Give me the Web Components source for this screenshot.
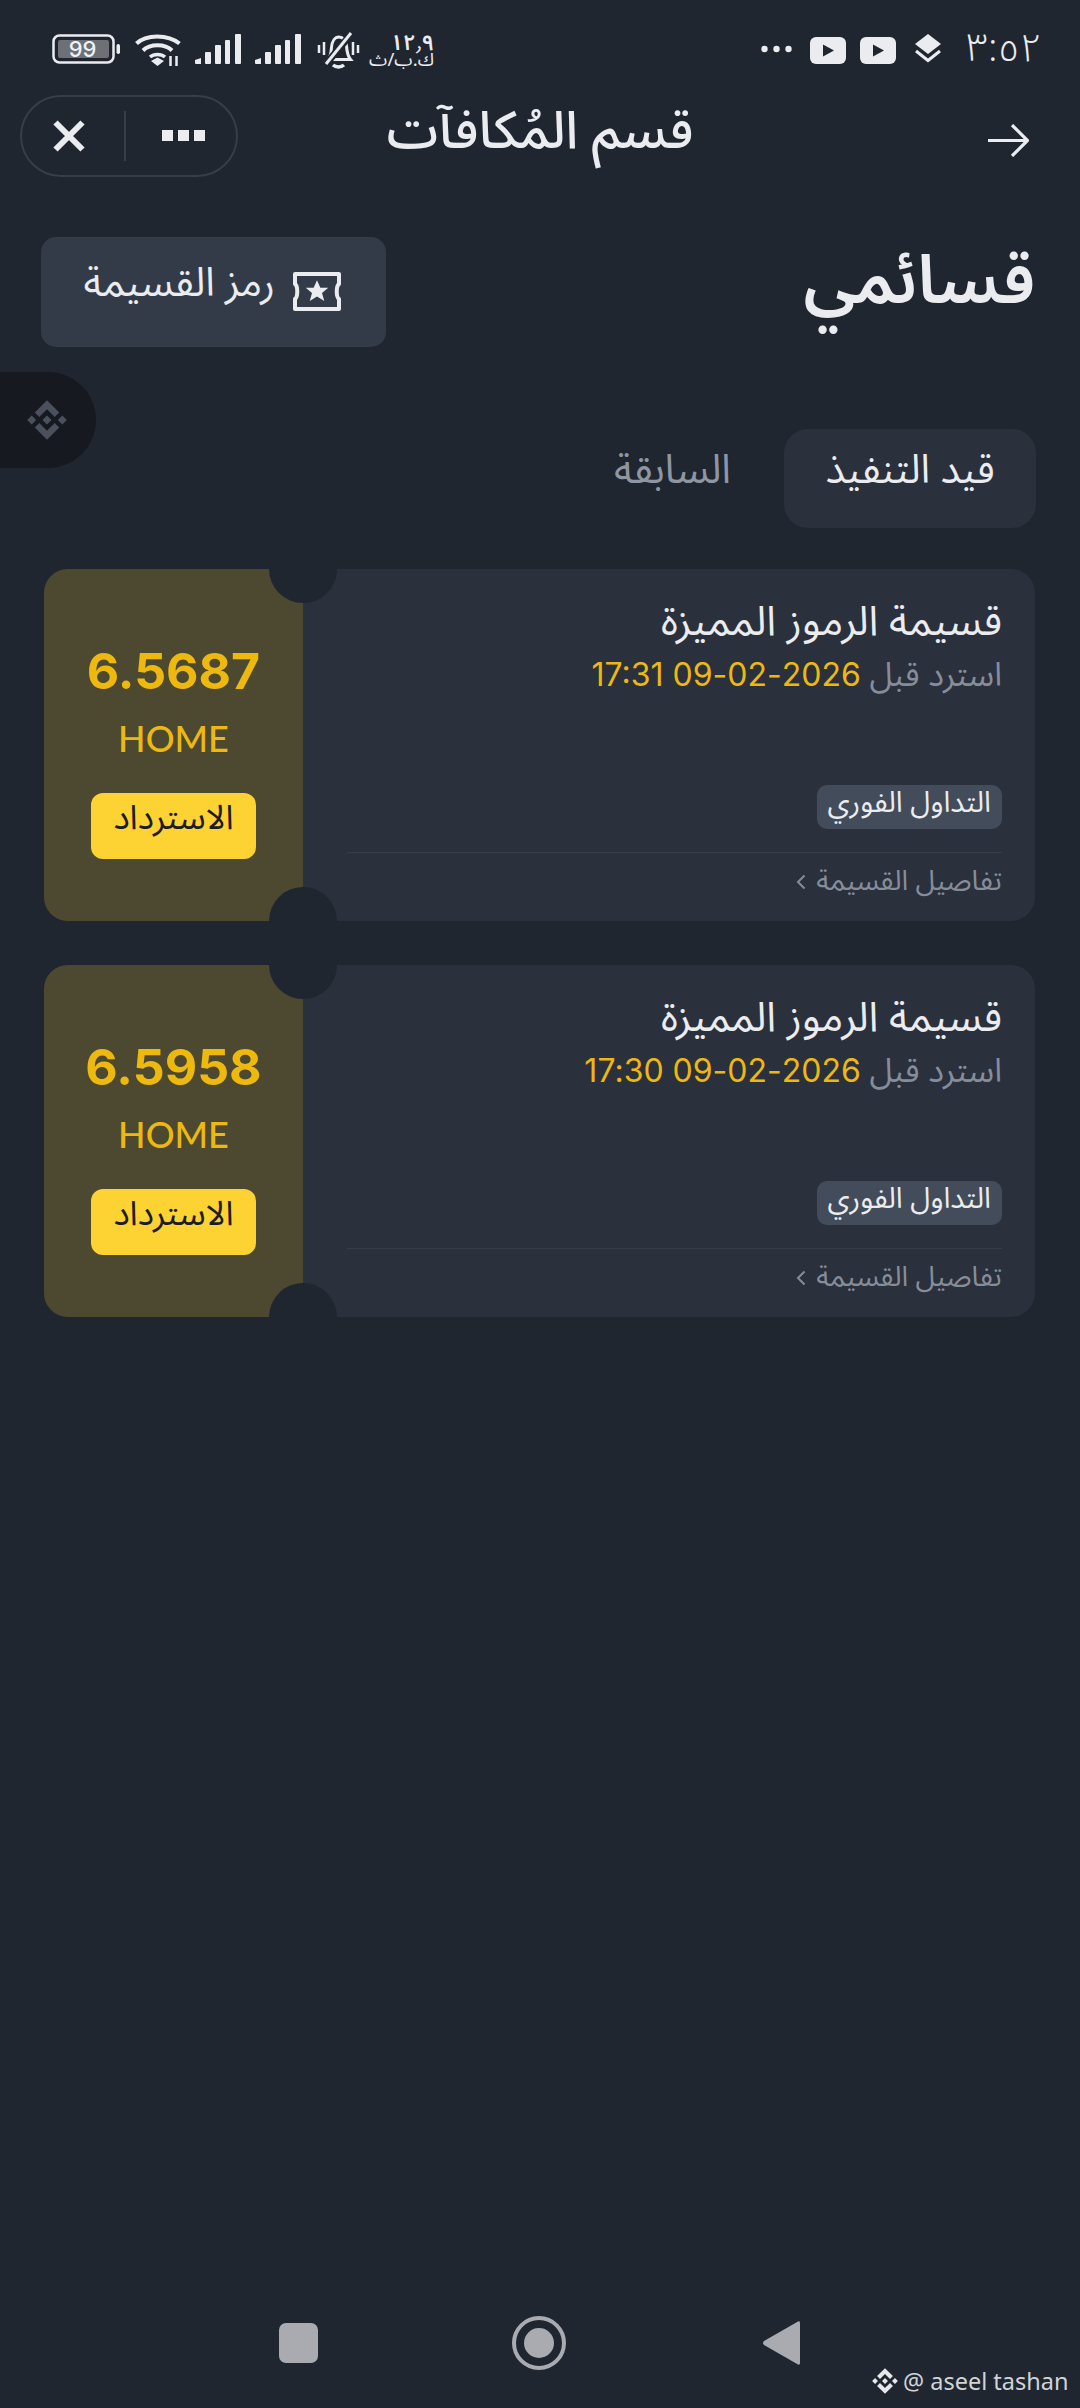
<!DOCTYPE html>
<html lang="ar" dir="rtl">
<head>
<meta charset="utf-8">
<style>
html,body{margin:0;padding:0;background:#1f2630}
body{width:1080px;height:2408px;overflow:hidden;font-family:"Noto Sans Arabic","Noto Sans","DejaVu Sans",sans-serif;color:#eaecef}
app-screen{display:flex}
</style>
</head>
<body>
<app-screen>
  <status-bar></status-bar>
  <nav-header title="قسم المُكافآت"></nav-header>
  <page-head heading="قسائمي" action="رمز القسيمة"></page-head>
  <tab-bar></tab-bar>
  <voucher-list>
    <voucher-card amount="6.5687" time="17:31" ls="0"></voucher-card>
    <voucher-card amount="6.5958" time="17:30" ls="-1"></voucher-card>
  </voucher-list>
  <system-nav></system-nav>
  <float-tab></float-tab>
  <water-mark></water-mark>
</app-screen>
<script>
const LOGO='<path d="M38.73 53.2L63 28.94l24.28 24.28 14.12-14.12L63 .7 24.61 39.09zM.7 63l14.12-14.12L28.94 63 14.82 77.12zM38.73 72.8L63 97.06l24.28-24.28 14.13 14.1L63 125.3 24.61 86.91zM97.06 63l14.12-14.12L125.3 63l-14.12 14.12zM77.32 63L63 48.68 52.41 59.27l-1.22 1.22-2.51 2.51L63 77.32 77.32 63z"/>';
function def(name,css,html){
  customElements.define(name,class extends HTMLElement{
    connectedCallback(){
      if(this.shadowRoot)return;
      const r=this.attachShadow({mode:'open'});
      const a=n=>this.getAttribute(n)||'';
      r.innerHTML='<style>'+css+'</style>'+html(a);
    }
  });
}
def('app-screen',':host{display:flex;flex-direction:column;position:relative;width:1080px;height:2408px;overflow:hidden}',()=>'<slot></slot>');

const signal='<svg width="46" height="30" viewBox="0 0 46 30" fill="#eaecef"><path d="M0 26l6-2v6H1a1 1 0 0 1-1-1z"/><rect x="10" y="18" width="6" height="12" rx="1"/><rect x="20" y="11" width="6" height="19" rx="1"/><rect x="30" y="6" width="5" height="24" rx="1"/><rect x="40" y="0" width="6" height="30" rx="1"/></svg>';
def('status-bar',`
:host{display:block;height:95px;box-sizing:border-box;padding:33px 38px 0 52px}
.row{display:flex;direction:ltr;align-items:flex-start;height:38px}
.l{display:flex;align-items:flex-start}
.r{margin-left:auto;display:flex;align-items:flex-start}
.bat{position:relative;width:68px;height:30px;margin-top:1px;display:block}
.bat span{position:absolute;left:0;width:61px;top:0;height:30px;text-align:center;font:500 22px/30px "Inter",sans-serif;color:#f0f1f3}
.sp{direction:rtl;display:flex;flex-direction:column;align-items:flex-start;margin-left:12px;margin-top:1px;color:#eaecef;width:62px;white-space:nowrap}
.sp b{font-weight:600;font-size:22px;line-height:18px;height:18px}
.sp span{font-size:18.500px;line-height:18px;height:18px}
.time{font-size:39px;line-height:32px;font-weight:300;color:#eaecef;margin-left:25px;direction:rtl;font-family:"Noto Sans Arabic","DejaVu Sans",sans-serif}
`,()=>`<div class="row">
<div class="l">
  <span class="bat"><svg width="68" height="30" viewBox="0 0 68 30"><rect x="1.5" y="1.5" width="60" height="27" rx="6" fill="none" stroke="#eaecef" stroke-width="2.5"/><rect x="6" y="6" width="51" height="18" rx="2" fill="#6d7077"/><rect x="64.5" y="10" width="3.5" height="10" rx="1.7" fill="#eaecef"/></svg><span>99</span></span>
  <svg style="margin-left:15px;margin-top:-1px" width="46" height="35" viewBox="0 0 46 35" fill="none" stroke="#eaecef"><path d="M1.5 11.500C11 2 33 2 44.500 11.500" stroke-width="4"/><path d="M8 18.500C15 11.500 30 11.500 37 18.500" stroke-width="4"/><path d="M15 25c4-3.500 11-3.500 15 0" stroke-width="3.500"/><path d="M16 29l6.500-3.500L29 29l-6.500 5z" fill="#eaecef" stroke="none"/><path d="M35.500 24v10M41.500 24v10" stroke-width="2.500"/></svg>
  <span style="margin-left:14px;margin-top:1px;display:block">${signal}</span>
  <span style="margin-left:14px;margin-top:1px;display:block">${signal}</span>
  <svg style="margin-left:16px;margin-top:-2px" width="43" height="39" viewBox="0 0 43 39" fill="none" stroke="#eaecef" stroke-width="3"><path d="M11 28.500c3-3 3-7 3.500-12C15 10 18 6 22 6s7 4 7.500 9c.5 6 1 10 4 13.500H11z"/><path d="M16 34c3 2.500 8 2.500 11 0" stroke-width="3.500"/><path d="M2 14v8M7 11v13M36 11v13M41 14v8" stroke-width="2.500"/><path d="M9 33L35 2" stroke="#1f2630" stroke-width="7"/><path d="M9 33L34 2" stroke-width="3"/></svg>
  <div class="sp"><b>١٢٫٩</b><span>ك.ب/ث</span></div>
</div>
<div class="r">
  <svg style="margin-top:12px" width="31" height="8" viewBox="0 0 31 8" fill="#eaecef"><circle cx="3.500" cy="4" r="3.200"/><circle cx="15.500" cy="4" r="3.200"/><circle cx="27.500" cy="4" r="3.200"/></svg>
  <svg style="margin-left:18px;margin-top:4px" width="36" height="27" viewBox="0 0 36 27"><rect width="36" height="27" rx="6" fill="#eaecef"/><path d="M13 7.500l11 6-11 6z" fill="#1f2630"/></svg>
  <svg style="margin-left:14px;margin-top:4px" width="36" height="27" viewBox="0 0 36 27"><rect width="36" height="27" rx="6" fill="#eaecef"/><path d="M13 7.500l11 6-11 6z" fill="#1f2630"/></svg>
  <svg style="margin-left:19px;margin-top:1px" width="26" height="29" viewBox="0 0 26 29"><path d="M13 0l13 10-13 10L0 10z" fill="#eaecef"/><path d="M1 17l12 9.500L25 17" fill="none" stroke="#eaecef" stroke-width="3"/></svg>
  <span class="time">٣:٥٢</span>
</div></div>`);

def('nav-header',`
:host{display:block;height:82px;padding:0 51px 0 20px}
.row{display:flex;direction:ltr;align-items:center;height:82px;position:relative}
.cap{width:218px;height:82px;box-sizing:border-box;border:2px solid #373d49;border-radius:41px;display:flex;align-items:center}
.x{margin-left:30px;display:block}
.d{width:2px;height:50px;background:#373d49;margin-left:38px}
.m{margin-left:36px;display:block}
h1{flex:1;margin:0;font-size:52px;line-height:72px;font-weight:500;text-align:center;color:#eaecef;padding:0 0 8px 31px;margin-left:-218px;margin-right:-41px;direction:rtl}
.a{display:block;margin-top:8px}
`,a=>`<div class="row">
<div class="cap">
<svg class="x" width="34" height="34" viewBox="0 0 34 34"><path d="M3.500 3.500L30.500 30.500M30.500 3.500L3.500 30.500" stroke="#eaecef" stroke-width="6" fill="none"/></svg>
<div class="d"></div>
<svg class="m" width="43" height="12" viewBox="0 0 43 12" fill="#eaecef"><rect width="11" height="11"/><rect x="16" width="11" height="11"/><rect x="32" width="11" height="11"/></svg>
</div>
<h1>${a('title')}</h1>
<svg class="a" width="41" height="33" viewBox="0 0 41 33" fill="none" stroke="#eaecef" stroke-width="3.200"><path d="M0 16.500H39"/><path d="M24 1l15.500 15.500L24 32"/></svg>
</div>`);

def('page-head',`
:host{display:block;padding:60px 45px 0 41px}
.row{display:flex;direction:rtl;justify-content:space-between;align-items:flex-start;height:110px}
h2{margin:0;font-size:67.500px;line-height:90px;font-weight:600;color:#eaecef}
.btn{width:345px;height:110px;box-sizing:border-box;background:#343b48;border-radius:15px;display:flex;align-items:flex-start;padding:17px 45px 0 0;gap:18px;font-size:40px;line-height:60px;color:#eaecef;white-space:nowrap}
svg{display:block;margin-top:18px;flex:none}
`,a=>`<div class="row"><h2>${a('heading')}</h2>
<div class="btn"><svg width="48" height="39" viewBox="0 0 48 39" fill="none" stroke="#eaecef" stroke-width="4" stroke-linejoin="round"><path d="M2 2H46V12C43 14 43 25 46 27V37H2V27C5 25 5 14 2 12z"/><path transform="translate(24 19.500) scale(1.250) translate(-24 -19.500)" d="M24 10.500l2.700 6h6.300l-5 4.200 1.800 6.300-5.800-3.600-5.800 3.600 1.800-6.300-5-4.200h6.300z" fill="#eaecef" stroke="none"/></svg><span>${a('action')}</span></div></div>`);

def('tab-bar',`
:host{display:flex;gap:53px;padding:82px 44px 0 0;align-items:flex-start}
.a{width:252px;height:99px;box-sizing:border-box;background:#2a303c;border-radius:24px;text-align:center;font-size:40px;line-height:83px;color:#eaecef}
.b{font-size:40.500px;line-height:83px;color:#8f96a3}
`,()=>`<div class="a">قيد التنفيذ</div><div class="b">السابقة</div>`);

def('voucher-list',':host{display:flex;flex-direction:column;gap:44px;padding:41px 45px 0 44px}',()=>'<slot></slot>');

def('voucher-card',`
:host{display:block}
.card{position:relative;display:flex;direction:rtl;height:352px;border-radius:24px;overflow:hidden;background:#2a303c}
.main{flex:1;display:flex;flex-direction:column;align-items:flex-start;padding:22px 33px 11px 44px;min-width:0}
.t{font-size:41.300px;line-height:62px;color:#eaecef;font-weight:400;white-space:nowrap}
.s{font-size:33px;line-height:44px;color:#868d9a;white-space:nowrap}
.s b{font-weight:400;color:#edb90f;font-family:"Inter","Noto Sans Arabic",sans-serif;font-size:32px}
.chip{margin-top:auto;height:44px;box-sizing:border-box;padding:0 11px;background:#434c5a;border-radius:10px;font-size:29px;line-height:36px;color:#eaecef;white-space:nowrap}
.rule{align-self:stretch;height:1px;background:#373d49;margin-top:23px;flex:none}
.more{height:57px;font-size:28px;line-height:54px;color:#868d9a;display:flex;align-items:center;gap:10px;white-space:nowrap}
.side{flex:none;width:259px;background:#4d4930;display:flex;flex-direction:column;align-items:center;color:#edb90f;direction:ltr;font-family:"Lato",sans-serif;box-sizing:border-box;padding-top:72px}
.amt{font-family:"Inter",sans-serif;font-size:50px;line-height:60px;font-weight:700}
.unit{font-size:36px;line-height:44px;margin-top:15px;font-weight:500}
.go{margin-top:33px;width:165px;height:66px;background:#fdd233;border-radius:12px;color:#1b1d22;font-size:34px;line-height:50px;text-align:center;direction:rtl;font-family:"Noto Sans Arabic","Noto Sans","DejaVu Sans",sans-serif}
i{position:absolute;left:225px;width:68px;height:68px;border-radius:50%;background:#1f2630}
i.top{top:-34px}i.bot{bottom:-34px}
`,a=>`<div class="card">
<div class="main">
<div class="t">قسيمة الرموز المميزة</div>
<div class="s">استرد قبل <b>2026-02-09 <span style="letter-spacing:${a('ls')}px">${a('time')}</span></b></div>
<div class="chip">التداول الفوري</div>
<div class="rule"></div>
<div class="more"><span>تفاصيل القسيمة</span><svg width="10" height="16" viewBox="0 0 10 16" fill="none" stroke="#868d9a" stroke-width="2"><path d="M8.500 1.500L2 8l6.500 6.500"/></svg></div>
</div>
<div class="side"><div class="amt">${a('amount')}</div><div class="unit">HOME</div><div class="go">الاسترداد</div></div>
<i class="top"></i><i class="bot"></i>
</div>`);

def('system-nav',`
:host{display:flex;direction:ltr;margin-top:auto;height:85px;box-sizing:border-box;padding:0 0 0 279px;align-items:flex-start}
svg{display:block}
`,()=>`<svg style="margin-top:0" width="39" height="40" viewBox="0 0 39 40"><rect width="39" height="40" rx="7" fill="#a9abb0"/></svg>
<svg style="margin-left:194px;margin-top:-7px" width="54" height="54" viewBox="0 0 54 54"><circle cx="27" cy="27" r="25" fill="none" stroke="#a9abb0" stroke-width="4"/><circle cx="27" cy="27" r="15" fill="#a9abb0"/></svg>
<svg style="margin-left:197px;margin-top:-3px" width="37" height="46" viewBox="0 0 37 46"><path d="M35 1.500c1-.5 2 0 2 1.500v40c0 1.500-1 2-2 1.500L1 25c-1.300-1-1.300-3 0-4z" fill="#a9abb0"/></svg>`);

def('float-tab',`
:host{position:absolute;left:0;top:372px;width:96px;height:96px;background:#16191f;border-radius:0 48px 48px 0;display:flex;align-items:center;justify-content:center}
svg{display:block;margin-right:2px}
`,()=>`<svg width="40" height="40" viewBox="0 0 126 126" fill="#4a515d">${LOGO}</svg>`);

def('water-mark',`
:host{position:absolute;left:872px;top:2366px;display:flex;direction:ltr;align-items:center;gap:5px;color:#d0d3d8;font-family:"Noto Sans",sans-serif;font-size:23.500px;line-height:30px;white-space:nowrap}
svg{display:block}
`,()=>`<svg width="26" height="26" viewBox="0 0 126 126" fill="#e6e8ea">${LOGO}</svg><span>@ aseel tashan</span>`);
</script>
</body>
</html>
